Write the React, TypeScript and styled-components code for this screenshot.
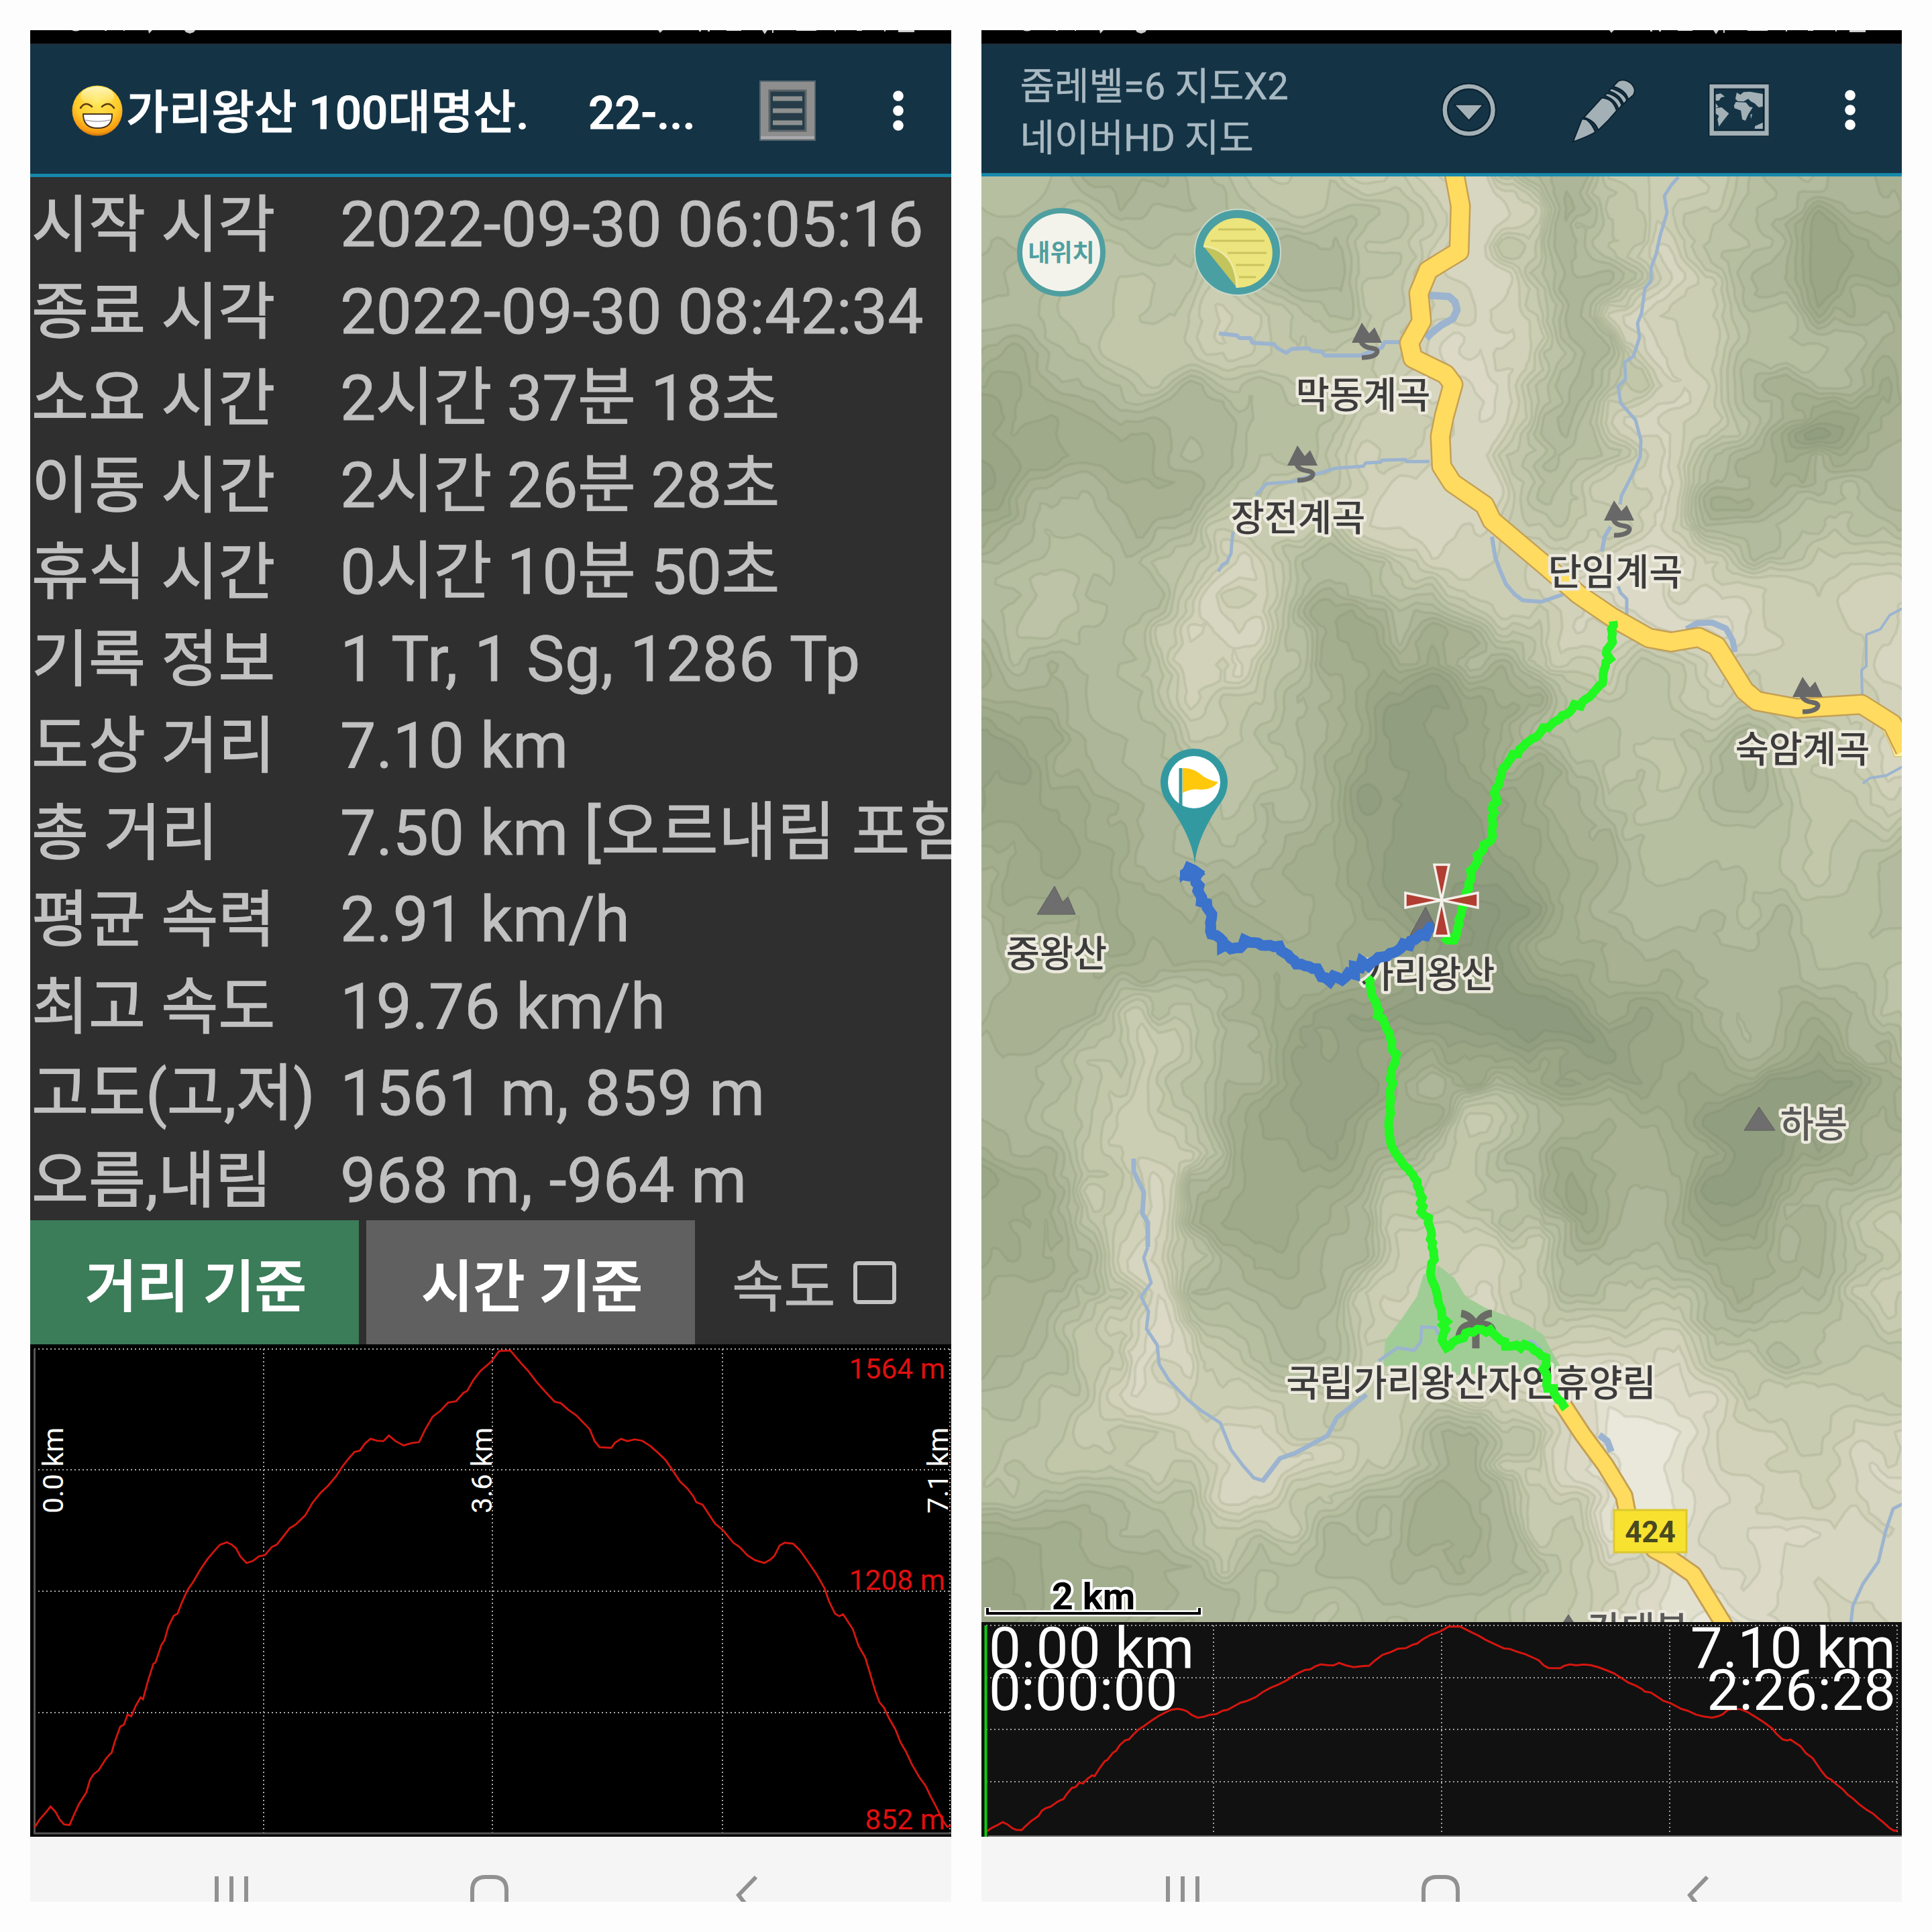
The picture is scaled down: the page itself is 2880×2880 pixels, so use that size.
// src/pages/TrackReport.tsx
import React from "react";
import styled, { createGlobalStyle } from "styled-components";

const GlobalStyle = createGlobalStyle`
  * { box-sizing: border-box; }
  body {
    margin: 0;
    background: #fdfdfd;
    font-family: Roboto, "Noto Sans CJK KR", sans-serif;
  }
`;

/* ---------- data ---------- */

const infoRows = [
  { label: "시작 시각", value: "2022-09-30 06:05:16" },
  { label: "종료 시각", value: "2022-09-30 08:42:34" },
  { label: "소요 시간", value: "2시간 37분 18초", track: -0.8 },
  { label: "이동 시간", value: "2시간 26분 28초", track: -0.8 },
  { label: "휴식 시간", value: "0시간 10분 50초", track: -0.8 },
  { label: "기록 정보", value: "1 Tr, 1 Sg, 1286 Tp", track: 0.5 },
  { label: "도상 거리", value: "7.10 km" },
  { label: "총 거리", value: "7.50 km [오르내림 포함]" },
  { label: "평균 속력", value: "2.91 km/h" },
  { label: "최고 속도", value: "19.76 km/h" },
  { label: "고도(고,저)", value: "1561 m, 859 m", track: 0.3 },
  { label: "오름,내림", value: "968 m, -964 m", track: 0.3 },
];

// elevation samples, x 0..1487, y 0..1030 (top = highest)
const elevation =
  "0,1018 8,1001 18,986 26,973 34,984 41,1001 48,1011 57,1012 62,996 72,968 84,943 90,916 96,904 104,896 116,871 122,862 125,859 130,836 139,803 145,799 151,777 157,781 164,759 172,741 176,745 184,706 193,669 196,667 206,629 211,619 217,591 226,567 232,563 239,539 248,513 257,496 269,469 281,446 294,426 301,416 312,411 320,416 327,424 334,441 344,455 354,451 364,441 374,438 385,421 393,416 404,398 414,381 424,373 439,354 451,327 464,306 476,291 489,271 500,249 509,234 519,219 528,216 536,201 545,191 556,195 566,196 575,184 586,196 599,205 612,200 624,198 634,171 646,144 659,131 671,114 684,111 696,93 702,89 712,66 724,46 741,27 754,4 772,3 779,14 792,34 802,48 814,69 829,91 844,112 854,115 866,129 879,141 894,161 901,171 909,196 917,209 936,210 942,199 952,191 962,196 974,192 986,195 999,206 1012,221 1024,236 1036,259 1047,281 1059,296 1069,313 1074,326 1084,331 1094,351 1104,371 1117,385 1134,412 1144,421 1157,439 1169,449 1184,455 1194,448 1201,439 1209,418 1217,412 1231,414 1242,428 1256,454 1269,479 1282,509 1289,536 1299,563 1306,568 1312,564 1318,576 1328,596 1337,631 1348,656 1356,691 1364,726 1371,751 1378,762 1387,786 1397,809 1405,836 1414,856 1424,884 1436,911 1446,929 1454,951 1464,976 1474,1003 1481,1016 1487,1013"
    .split(" ")
    .map((p) => p.split(",").map(Number));

const elevationPath = (x: number, y: number, w: number, h: number) =>
  elevation.map(([px, py]) => `${(x + (px / 1487) * w).toFixed(1)},${(y + (py / 1030) * h).toFixed(1)}`).join(" ");

/* ---------- terrain ---------- */

// coarse height grid, one row per ~127px of map, 0 = valley floor
const heights = [
  [4, 5, 6, 4, 2, 2, 1, 5, 2, 3, 5, 5],
  [5, 4, 4, 3, 5, 3, 1, 5, 1, 4, 7, 6],
  [5, 4, 3, 2, 3, 2, 1, 5, 1, 3, 4, 6],
  [8, 6, 6, 4, 4, 2, 1, 5, 1, 4, 8, 5],
  [6, 5, 5, 3, 2, 1, 1, 3, 1, 6, 4, 5],
  [4, 3, 4, 1, 6, 4, 3, 1, 1, 1, 2, 1],
  [6, 5, 4, 2, 5, 8, 7, 3, 3, 2, 2, 1],
  [8, 6, 5, 3, 5, 8, 7, 5, 3, 5, 3, 1],
  [6, 7, 5, 4, 6, 8, 8, 6, 4, 4, 3, 4],
  [5, 6, 6, 6, 6, 7, 9, 6, 5, 5, 4, 4],
  [5, 5, 3, 5, 7, 8, 8, 9, 7, 5, 6, 3],
  [5, 4, 2, 5, 8, 6, 3, 5, 6, 8, 8, 6],
  [7, 5, 1, 6, 6, 3, 3, 7, 5, 8, 5, 3],
  [6, 5, 1, 5, 5, 2, 1, 4, 3, 6, 5, 2],
  [5, 4, 1, 3, 4, 2, 1, 1, 1, 3, 3, 3],
  [4, 3, 2, 1, 1, 3, 5, 1, 0, 1, 2, 1],
  [6, 6, 5, 3, 4, 6, 5, 2, 0, 1, 1, 1],
  [7, 6, 5, 5, 4, 4, 4, 3, 1, 0, 1, 1],
];

const clamp = (v: number, a: number, b: number) => Math.max(a, Math.min(b, v));

const cubic = (p: number[], t: number) =>
  p[1] + 0.5 * t * (p[2] - p[0] + t * (2 * p[0] - 5 * p[1] + 4 * p[2] - p[3] + t * (3 * (p[1] - p[2]) + p[3] - p[0])));

const baseHeight = (x: number, y: number) => {
  const gx = clamp(x / 124.8, 0, 10.999);
  const gy = clamp(y / 126.8, 0, 16.999);
  const ix = Math.floor(gx);
  const iy = Math.floor(gy);
  const rows = [-1, 0, 1, 2].map((dy) => {
    const row = heights[clamp(iy + dy, 0, 17)];
    return cubic([-1, 0, 1, 2].map((dx) => row[clamp(ix + dx, 0, 11)]), gx - ix);
  });
  return 9 * Math.pow(Math.max(0, cubic(rows, gy - iy)) / 9, 0.88);
};

const hash = (x: number, y: number, s: number) => {
  const n = Math.sin(x * 127.1 + y * 311.7 + s * 74.7) * 43758.5453;
  return n - Math.floor(n);
};

// linear interpolation keeps the gullies angular
const noise = (x: number, y: number, s: number) => {
  const ix = Math.floor(x);
  const iy = Math.floor(y);
  const u = x - ix;
  const v = y - iy;
  const a = hash(ix, iy, s) * (1 - u) + hash(ix + 1, iy, s) * u;
  const b = hash(ix, iy + 1, s) * (1 - u) + hash(ix + 1, iy + 1, s) * u;
  return (a * (1 - v) + b * v) * 2 - 1;
};

const terrainHeight = (x: number, y: number) => {
  const wx = noise(x / 52, y / 52, 1) * 46 + noise(x / 24, y / 24, 2) * 15;
  const wy = noise(x / 52, y / 52, 3) * 46 + noise(x / 24, y / 24, 4) * 15;
  const ridge = 0.5 - Math.abs(noise((x + wx) / 120, (y + wy) / 120, 5));
  return baseHeight(x + wx, y + wy) + ridge * 0.9;
};

const STEP = 8;
const GW = 179;
const GH = 277;

const field: number[] = [];
for (let j = 0; j < GH; j++) {
  for (let i = 0; i < GW; i++) {
    const edge = i === 0 || j === 0 || i === GW - 1 || j === GH - 1;
    field.push(edge ? -20 : terrainHeight((i - 3) * STEP, (j - 3) * STEP));
  }
}

// marching squares: from-edge / to-edge for every corner case
const cases: Record<number, string[]> = {
  1: ["LT"], 2: ["TR"], 3: ["LR"], 4: ["RB"], 5: ["LT", "RB"], 6: ["TB"], 7: ["LB"],
  8: ["BL"], 9: ["BT"], 10: ["TR", "BL"], 11: ["BR"], 12: ["RL"], 13: ["RT"], 14: ["TL"],
};

const contour = (level: number) => {
  const next = new Map<number, number>();
  const pts = new Map<number, string>();
  const at = (i: number, j: number) => field[j * GW + i];
  const edgeKey = (i: number, j: number, e: string) => {
    if (e === "B") j += 1;
    if (e === "R") i += 1;
    const vertical = e === "L" || e === "R";
    const key = (j * GW + i) * 2 + (vertical ? 1 : 0);
    if (!pts.has(key)) {
      const a = at(i, j);
      const b = vertical ? at(i, j + 1) : at(i + 1, j);
      const t = (level - a) / (b - a);
      const x = (i - 3 + (vertical ? 0 : t)) * STEP;
      const y = (j - 3 + (vertical ? t : 0)) * STEP;
      pts.set(key, `${x.toFixed(1)} ${y.toFixed(1)}`);
    }
    return key;
  };
  for (let j = 0; j < GH - 1; j++) {
    for (let i = 0; i < GW - 1; i++) {
      const idx =
        (at(i, j) > level ? 1 : 0) | (at(i + 1, j) > level ? 2 : 0) |
        (at(i + 1, j + 1) > level ? 4 : 0) | (at(i, j + 1) > level ? 8 : 0);
      (cases[idx] || []).forEach((c) => next.set(edgeKey(i, j, c[0]), edgeKey(i, j, c[1])));
    }
  }
  let d = "";
  while (next.size) {
    const start = next.keys().next().value as number;
    let key: number | undefined = start;
    const loop: string[] = [];
    while (key !== undefined && next.has(key)) {
      loop.push(pts.get(key) as string);
      const to: number | undefined = next.get(key);
      next.delete(key);
      key = to;
    }
    // specks of a few cells are dropped
    if (loop.length > 14) d += `M${loop.join("L")}Z`;
  }
  return d;
};

const palette = [
  [230, 228, 213], [219, 217, 197], [208, 209, 184], [198, 202, 174], [187, 194, 165],
  [177, 186, 156], [167, 177, 146], [158, 169, 138], [150, 161, 131], [141, 153, 124],
];

const shade = (h: number) => {
  const v = clamp(h, 0, 8.999);
  const i = Math.floor(v);
  return `rgb(${palette[i].map((c, k) => Math.round(c + (palette[i + 1][k] - c) * (v - i))).join(",")})`;
};

const bands = Array.from({ length: 19 }, (_, i) => 0.2 + i * 0.5).map((level) => ({
  d: contour(level),
  fill: shade(level + 0.2),
}));

/* ---------- map lines ---------- */

const road1 =
  "2167,255 2169,264 2177,307 2175,375 2155,387 2129,403 2115,437 2119,479 2101,511 2106,534 2155,558 2166,573 2153,620 2147,650 2149,695 2165,720 2213,753 2224,776 2307,846 2353,886 2403,920 2458,951 2491,957 2532,950 2559,963 2601,1030 2619,1045 2679,1056 2775,1050 2821,1079 2840,1118";
const road2 = "2326,2088 2359,2138 2393,2184 2421,2230 2427,2262 2466,2310 2488,2322 2524,2347 2575,2430";

const rivers = [
  { w: 6, p: "1817,497 1844,500 1848,504 1864,504 1867,511 1899,513 1903,518 1917,526 1926,520 1950,519 1956,523 1970,524 1975,530 2028,530 2050,522 2060,518 2064,510 2087,510" },
  { w: 11, p: "2128,440 2160,442 2169,450 2172,462 2166,475 2148,485 2133,497 2126,504" },
  { w: 5, p: "2131,688 2097,688 2095,685 2060,686 2058,689 2036,690 2032,695 1991,698 1968,705 1927,718 1888,721 1872,738" },
  { w: 5, p: "1838,793 1836,812 1835,825 1829,838 1822,842 1816,852" },
  { w: 5, p: "2502,264 2492,275 2481,292 2485,317 2475,350 2469,378 2461,400 2461,418 2452,430 2447,467 2441,482 2444,503 2435,531 2422,540 2423,565 2412,576 2416,601 2438,626 2446,656 2445,681 2433,708 2417,739 2415,752" },
  { w: 6, p: "2401,785 2392,800 2388,822" },
  { w: 5, p: "2412,874 2416,884 2425,893 2425,920" },
  { w: 6, p: "2224,800 2229,831 2236,850 2245,871 2258,886 2270,895 2298,897 2330,886" },
  { w: 9, p: "2514,938 2530,929 2552,928 2573,937 2583,955 2586,972" },
  { w: 4, p: "2840,905 2817,917 2803,938 2782,946 2782,993 2775,999 2776,1036" },
  { w: 4, p: "2777,1168 2787,1160 2812,1156 2836,1143" },
  { w: 7, p: "1690,1727 1690,1746 1697,1761 1705,1777 1703,1809 1711,1822 1711,1859" },
  { w: 5, p: "1711,1859 1705,1875 1711,1896 1716,1912 1701,1933 1712,1955 1709,1981 1725,2005 1728,2034 1743,2058 1771,2087 1791,2103 1819,2121 1835,2161 1853,2185 1869,2203 1885,2208" },
  { w: 7, p: "1882,2208 1908,2174 1931,2166 1979,2140 1993,2113 2037,2079" },
  { w: 5, p: "2055,2029 2083,2009 2108,2013 2118,2000 2119,1978 2140,1979 2144,1990" },
  { w: 6, p: "2241,1995 2250,2003 2270,2003 2284,2000 2298,2014" },
  { w: 5, p: "2840,2240 2822,2249 2811,2282 2800,2328 2777,2361 2762,2394 2759,2420" },
  { w: 10, p: "2384,2139 2396,2148 2402,2164" },
];

const tracks = {
  north:
    "2405,926 2398,975 2388,1018 2369,1039 2334,1064 2298,1091 2256,1125 2240,1152 2231,1183 2224,1212 2226,1248 2207,1271 2195,1299 2187,1330 2177,1365 2170,1396 2155,1404",
  south:
    "2037,1458 2052,1501 2073,1547 2083,1572 2073,1603 2073,1654 2070,1690 2078,1715 2112,1761 2118,1793 2132,1835 2137,1877 2132,1896 2143,1933 2152,1970 2150,1998 2157,2010 2180,1991 2196,1982 2222,1982 2244,2007 2278,2005 2303,2024 2306,2063 2334,2100",
  recorded:
    "1764,1312 1769,1300 1779,1297 1787,1327 1805,1363 1805,1394 1828,1414 1848,1412 1863,1403 1899,1412 1930,1430 1976,1458 2006,1455 2032,1438 2073,1422 2103,1402 2137,1381",
};

// gps jitter along a track
const roughen = (line: string, amp: number, seed: number) => {
  const pts = line.split(" ").map((p) => p.split(",").map(Number));
  const out: string[] = [];
  pts.slice(1).forEach(([x2, y2], k) => {
    const [x1, y1] = pts[k];
    const len = Math.hypot(x2 - x1, y2 - y1);
    const n = Math.max(1, Math.round(len / 6));
    for (let i = 0; i < n; i++) {
      const r = hash(k, i, seed);
      const o = (r - 0.5) * amp * (r > 0.9 || r < 0.08 ? 2.2 : 1);
      const t = i / n;
      out.push(`${(x1 + (x2 - x1) * t - ((y2 - y1) / len) * o).toFixed(1)},${(y1 + (y2 - y1) * t + ((x2 - x1) / len) * o).toFixed(1)}`);
    }
  });
  out.push(line.split(" ").pop() as string);
  return out.join(" ");
};

const labels = [
  { text: "막동계곡", x: 2032, y: 608 },
  { text: "장전계곡", x: 1935, y: 791 },
  { text: "단임계곡", x: 2408, y: 872 },
  { text: "숙암계곡", x: 2687, y: 1136 },
  { text: "중왕산", x: 1575, y: 1441 },
  { text: "가리왕산", x: 2128, y: 1472 },
  { text: "하봉", x: 2704, y: 1695, soft: true },
  { text: "국립가리왕산자연휴양림", x: 2193, y: 2081 },
  { text: "간대봉", x: 2442, y: 2449, soft: true },
];

const valleys = [[2015, 511], [1919, 694], [2391, 776], [2672, 1039]];

/* ---------- icons ---------- */

const GrinIcon = () => (
  <svg width="76" height="78" viewBox="0 0 76 78">
    <defs>
      <radialGradient id="face" cx="0.5" cy="0.3" r="0.72">
        <stop offset="0" stopColor="#ffe95e" />
        <stop offset="0.6" stopColor="#fecb2a" />
        <stop offset="0.88" stopColor="#f79a12" />
        <stop offset="1" stopColor="#b9640b" />
      </radialGradient>
      <linearGradient id="shine" x1="0" y1="0" x2="0" y2="1">
        <stop offset="0" stopColor="#fff6b8" />
        <stop offset="1" stopColor="#fff6b8" stopOpacity="0" />
      </linearGradient>
    </defs>
    <circle cx="38" cy="39" r="37.5" fill="url(#face)" />
    <ellipse cx="38" cy="17" rx="25" ry="14" fill="url(#shine)" />
    <path d="M13 35Q20 24 30 33M45 33Q55 24 63 35" fill="none" stroke="#5b3a12" strokeWidth="2.6" strokeLinecap="round" />
    <path d="M17 44H60Q61 65 38.500 65Q17 65 17 44Z" fill="#fff" stroke="#4c3420" strokeWidth="2" />
    <path d="M20 53Q38 57 57 53" fill="none" stroke="#a8a8b2" strokeWidth="1.6" />
  </svg>
);

const NoteIcon = () => (
  <svg width="84" height="92" viewBox="0 0 84 92">
    <rect x="0" y="1" width="84" height="90" fill="#55656e" />
    <rect x="2" y="3" width="80" height="86" fill="#8e8e8e" />
    <rect x="2" y="84" width="80" height="4" fill="#a9a9ad" />
    <rect x="15" y="16" width="54" height="60" fill="#263d49" stroke="#5c6468" strokeWidth="3" />
    <path d="M20 28H64M20 46H64M20 64H64" stroke="#8e9090" strokeWidth="7" />
  </svg>
);

const MoreIcon = () => (
  <svg width="16" height="60" viewBox="0 0 16 60">
    <circle cx="8" cy="8" r="7.800" fill="#fff" />
    <circle cx="8" cy="30" r="7.800" fill="#fff" />
    <circle cx="8" cy="52" r="7.800" fill="#fff" />
  </svg>
);

const DropIcon = () => (
  <svg width="82" height="82" viewBox="84 97 242 246" preserveAspectRatio="none">
    <circle cx="204" cy="220" r="106" fill="none" stroke="#0c2230" strokeWidth="32" />
    <circle cx="204" cy="220" r="106" fill="none" stroke="#a3b0b6" strokeWidth="19" />
    <path d="M140 196H267L204 267Z" fill="#a3b0b6" stroke="#0c2230" strokeWidth="5" />
  </svg>
);

const PencilIcon = () => (
  <svg width="98" height="98" viewBox="645 66 284 294" preserveAspectRatio="none">
    <g fill="#a3b0b6" stroke="#0c2230" strokeWidth="6">
      <path d="M653 355L692 252L712 256Q738 278 750 312Q700 340 653 355Z" />
      <path d="M700 246L778 158Q826 160 842 216Q806 262 762 304Q750 262 700 246Z" />
      <path d="M790 148L800 138Q852 150 864 192L850 210Q838 166 790 148Z" />
      <path d="M808 128L818 116Q876 136 886 170L872 188Q858 144 808 128Z" />
      <path d="M826 108L848 84Q872 70 902 92Q930 120 914 146L892 166Q880 122 826 108Z" />
    </g>
  </svg>
);

const WorldIcon = () => (
  <svg width="92" height="82" viewBox="1236 97 270 246" preserveAspectRatio="none">
    <rect x="1238" y="99" width="266" height="240" fill="#0c2230" />
    <path d="M1243 105H1502V335H1243ZM1262 123V314H1484V123Z" fill="#a3b0b6" fillRule="evenodd" />
    <rect x="1267" y="128" width="210" height="181" fill="#143446" />
    <g fill="#a3b0b6">
      <path d="M1270 150L1292 146L1310 160L1294 164L1284 178H1270Z" />
      <path d="M1270 190L1282 206L1270 210ZM1270 212L1296 208L1328 236L1300 272L1284 294L1278 262L1284 246L1270 236Z" />
      <path d="M1356 170L1362 142L1378 152L1392 140L1420 138L1476 148V204L1458 208L1440 190L1424 182L1412 170L1392 182L1366 180Z" />
      <path d="M1350 200L1358 184L1402 186L1418 206L1432 208L1412 240L1400 268L1386 262L1380 222L1352 212Z" />
      <path d="M1422 240L1430 238L1424 260ZM1440 304L1442 292L1476 276V304Z" />
    </g>
  </svg>
);

const NavIcons = () => (
  <svg width="1373" height="97" viewBox="0 0 1373 97" fill="none" stroke="#919191" strokeWidth="6">
    <path d="M278 59V97M300 59V97M322 59V97" />
    <path d="M659 100V80Q659 60 679 60H690Q710 60 710 80V100" />
    <path d="M1082 60L1056 87L1066 100" />
  </svg>
);

const StatusMarks = () => (
  <svg width="1373" height="19" viewBox="0 0 1373 19" fill="#cfcfcf">
    <path d="M62 0H74Q68 3 62 0ZM111 0H114V1H111ZM139 0H141V1H139ZM176 0H182L177 5ZM230 0H246L244 3L238 5L232 3Z" />
    <path d="M936 0H943L939 4ZM997 0H1000V2H997ZM1010 0H1013V2H1010ZM1038 0H1060V1H1038ZM1091 0H1099L1095 6ZM1106 0H1108V4H1106ZM1142 0H1172V1H1142ZM1199 0H1201V2H1199ZM1232 0H1240V1H1232ZM1273 0H1275V2H1273ZM1294 0H1318V3H1294Z" />
  </svg>
);

/* ---------- map ---------- */

const TerrainMap = () => (
  <svg width="1373" height="2155" viewBox="1463 263 1373 2155">
    <rect x="1463" y="263" width="1373" height="2157" fill="#e9e8da" />
    <g transform="translate(1463 263)">
      {bands.map((b) => (
        <path key={b.fill} d={b.d} fill={b.fill} stroke="rgba(104,120,88,0.14)" strokeWidth="4" strokeLinejoin="round" />
      ))}
    </g>
    <path d="M2146 1888L2168 1905L2185 1933L2213 1949L2269 1970L2300 1989L2317 2021L2328 2040L2168 2050L2062 2036L2065 1998L2090 1965L2112 1933L2122 1900Z" fill="#a0cd95" />
    <g fill="none" stroke="#9cb4cf" strokeLinejoin="round">
      {rivers.map((r) => (
        <polyline key={r.p} points={r.p} strokeWidth={r.w} />
      ))}
    </g>
    <path d="M2784 1060L2812 1064L2836 1100V1128H2824Q2812 1090 2784 1060Z" fill="#fff29a" stroke="#d8c88a" strokeWidth="2" />
    <g fill="none" strokeLinejoin="round">
      <polyline points={road1} stroke="#c5a055" strokeWidth="31" />
      <polyline points={road1} stroke="#ffdc60" strokeWidth="26" />
      <polyline points={road2} stroke="#c5a055" strokeWidth="28" />
      <polyline points={road2} stroke="#ffdc60" strokeWidth="22" />
    </g>

    <rect x="2406" y="2251" width="108" height="63" fill="#f8e230" stroke="#dcc82e" strokeWidth="3" />
    <RoadNumber x="2460" y="2299">424</RoadNumber>

    {valleys.map(([x, y]) => (
      <g key={x} transform={`translate(${x} ${y})`}>
        <path d="M0 0L15 -30L26 -14L34 -23L45 0Z" fill="#686868" />
        <path d="M14 -1Q18 7 30 8Q42 10 36 17Q30 22 15 22" fill="none" stroke="#686868" strokeWidth="7" />
      </g>
    ))}
    <g fill="#6e6e6e" stroke="#5d5d5d" strokeWidth="1">
      <path d="M1546 1363L1572 1321L1584 1345L1592 1337L1603 1363Z" />
      <path d="M2102 1394L2125 1352L2143 1388Z" />
      <path d="M2600 1685L2622 1650L2646 1685Z" />
      <path d="M2326 2425L2338 2407L2350 2425Z" />
    </g>
    <path d="M2200 1984V2010M2200 1976Q2192 1960 2178 1958M2200 1976Q2210 1958 2224 1958M2198 1974Q2178 1974 2175 1992M2202 1974Q2222 1972 2225 1984" fill="none" stroke="#6b6b66" strokeWidth="11" />

    {labels.map((l) => (
      <MapLabel key={l.text} x={l.x} y={l.y} $soft={l.soft}>
        {l.text}
      </MapLabel>
    ))}

    <g fill="none" strokeMiterlimit="8">
      <polyline points={roughen(tracks.north, 3.5, 11)} stroke="#22f822" strokeWidth="13" />
      <polyline points={roughen(tracks.south, 4, 12)} stroke="#22f822" strokeWidth="13" />
      <polyline points={roughen(tracks.recorded, 5, 13)} stroke="#3a72cc" strokeWidth="16" />
    </g>
    <path d="M2146 1400L2176 1398L2172 1408H2155Z" fill="#22f822" />
    <path d="M1759 1316V1298L1775 1286L1797 1303L1785 1312L1770 1306Z" fill="#3a72cc" />

    <g transform="translate(2149 1342)" fill="#b5352b" fillOpacity="0.92" stroke="#f4f0ea" strokeWidth="3.500">
      <path d="M0 0L-11 -53H11Z" />
      <path d="M0 0L-11 53H11Z" />
      <path d="M0 0L-54 -11V11Z" />
      <path d="M0 0L54 -11V11Z" />
    </g>

    <path d="M1781 1288Q1778 1248 1740 1196A50 50 0 1 1 1820 1196Q1784 1248 1781 1288Z" fill="#3399a1" />
    <circle cx="1780" cy="1166" r="39" fill="#fff" />
    <path d="M1760 1145V1201" stroke="#3399a1" strokeWidth="5" />
    <path d="M1763 1145Q1776 1144 1788 1153Q1800 1163 1816 1166Q1806 1178 1790 1177Q1774 1175 1763 1182Z" fill="#ffc80a" />

    <circle cx="1582" cy="376" r="62" fill="#f3f3ec" stroke="#4f9fa0" strokeWidth="8" />
    <LocateText x="1582" y="390">내위치</LocateText>

    <circle cx="1845" cy="376" r="64" fill="#4a9fa3" stroke="#c9d8c8" strokeWidth="2" />
    <path d="M1794 366A52 52 0 1 1 1844 429Q1838 374 1794 366Z" fill="#ece47c" />
    <path d="M1794 367Q1842 372 1844 429Z" fill="#c4c45c" />
    <path d="M1794 367Q1842 372 1844 429" fill="none" stroke="#eeeaa0" strokeWidth="3" />
    <path d="M1816 342H1872M1805 359H1885M1830 377H1888M1842 395H1885M1847 413H1872" stroke="#cbc35e" strokeWidth="3" />

    <path d="M1472 2396V2405H1788V2396" fill="none" stroke="#fff" strokeWidth="9" />
    <path d="M1472 2397V2405H1788V2397" fill="none" stroke="#000" strokeWidth="4" />
    <ScaleText x="1630" y="2399">2 km</ScaleText>
  </svg>
);

/* ---------- charts ---------- */

const ProfileChart = () => (
  <svg width="1373" height="734" viewBox="45 2004 1373 734">
    <g stroke="#a8a8a8" strokeWidth="2" strokeDasharray="2 4">
      <path d="M51 2011H1418M51 2191H1418M51 2372H1418M51 2553H1418" />
      <path d="M393 2011V2733M734 2011V2733M1077 2011V2733M1416 2011V2733" />
    </g>
    <path d="M51.500 2011V2733H1418" fill="none" stroke="#555" strokeWidth="3" />
    <polyline points={elevationPath(51.5, 2011, 1366, 722)} fill="none" stroke="#d4160f" strokeWidth="2.800" />
    <AltText x="1409" y="2055">1564 m</AltText>
    <AltText x="1409" y="2370">1208 m</AltText>
    <AltText x="1409" y="2727">852 m</AltText>
    <DistText transform="translate(94 2256) rotate(-90)">0.0 km</DistText>
    <DistText transform="translate(733 2256) rotate(-90)">3.6 km</DistText>
    <DistText transform="translate(1413 2256) rotate(-90)">7.1 km</DistText>
  </svg>
);

const MiniChart = () => (
  <svg width="1373" height="320" viewBox="1463 2419 1373 320">
    <g stroke="#a0a0a0" strokeWidth="2" strokeDasharray="2 4">
      <path d="M1470 2424H2829M1470 2502H2829M1470 2579H2829M1470 2657H2829" />
      <path d="M1809 2424V2733M2149 2424V2733M2489 2424V2733M2828 2424V2733" />
    </g>
    <polyline points={elevationPath(1471, 2424.5, 1358, 310)} fill="none" stroke="#d4160f" strokeWidth="3" />
    <path d="M1469.500 2424V2739" stroke="#10c810" strokeWidth="4" />
    <path d="M1473 2738H2836" stroke="#8a8a8a" strokeWidth="1.500" />
    <StatText x="1474" y="2487">0.00 km</StatText>
    <StatText x="1474" y="2550">0:00:00</StatText>
    <StatText x="2826" y="2487" textAnchor="end">7.10 km</StatText>
    <StatText x="2826" y="2550" textAnchor="end">2:26:28</StatText>
  </svg>
);

/* ---------- page ---------- */

const App = () => {
  return (
    <Page>
      <GlobalStyle />
      <Phone>
        <StatusBar><StatusMarks /></StatusBar>
        <Header>
          <GrinIcon />
          <Title>{"가리왕산 100대명산.     22-..."}</Title>
          <HeaderIcon $gap={98}><NoteIcon /></HeaderIcon>
          <HeaderIcon $gap={115}><MoreIcon /></HeaderIcon>
        </Header>
        <InfoTable>
          {infoRows.map((row) => (
            <InfoRow key={row.label}>
              <RowLabel>{row.label}</RowLabel>
              <RowValue $track={row.track || 0}>{row.value}</RowValue>
            </InfoRow>
          ))}
        </InfoTable>
        <ModeBar>
          <ModeButton $active>거리 기준</ModeButton>
          <ModeButton>시간 기준</ModeButton>
          <SpeedToggle>
            속도
            <CheckBox />
          </SpeedToggle>
        </ModeBar>
        <ChartBox $color="#000"><ProfileChart /></ChartBox>
        <NavBar><NavIcons /></NavBar>
      </Phone>

      <Phone>
        <StatusBar><StatusMarks /></StatusBar>
        <Header>
          <MapTitle>
            <div>줌레벨=6 지도X2</div>
            <div>네이버HD 지도</div>
          </MapTitle>
          <HeaderIcon $gap={2}><DropIcon /></HeaderIcon>
          <HeaderIcon $gap={111}><PencilIcon /></HeaderIcon>
          <HeaderIcon $gap={106}><WorldIcon /></HeaderIcon>
          <HeaderIcon $gap={112}><MoreIcon /></HeaderIcon>
        </Header>
        <MapBox><TerrainMap /></MapBox>
        <ChartBox $color="#111"><MiniChart /></ChartBox>
        <NavBar><NavIcons /></NavBar>
      </Phone>
    </Page>
  );
};

const Page = styled.div`
  display: flex;
  gap: 45px;
  width: 2880px;
  height: 2880px;
  padding: 45px;
  background: #fdfdfd;
`;

const Phone = styled.section`
  display: flex;
  flex-direction: column;
  width: 1373px;
  height: 2790px;
  overflow: hidden;
  background: #2f2f2f;

  svg {
    display: block;
    flex-shrink: 0;
  }
`;

const StatusBar = styled.div`
  height: 20px;
  background: #000;
`;

const Header = styled.header`
  display: flex;
  align-items: center;
  height: 199px;
  padding-left: 62px;
  padding-top: 4px;
  background: #143446;
  border-top: 2px solid #20303a;
  border-bottom: 5px solid #1788ab;
`;

const Title = styled.h1`
  margin: 0 0 0 5px;
  padding-top: 8px;
  width: 846px;
  font-size: 69.200px;
  font-weight: 500;
  line-height: 100px;
  word-spacing: 0.500px;
  color: #fff;
  white-space: pre;
  -webkit-text-stroke: 1px #fff;
`;

const MapTitle = styled.div`
  width: 626px;
  margin-left: -4px;
  padding-top: 8px;
  font-size: 56px;
  line-height: 77px;
  color: #a9b9c2;
  white-space: nowrap;
  -webkit-text-stroke: 0.500px #a9b9c2;
`;

const HeaderIcon = styled.div<{ $gap: number }>`
  margin-left: ${(p) => p.$gap}px;
`;

const InfoTable = styled.div`
  height: 1555px;
`;

const InfoRow = styled.div`
  display: grid;
  grid-template-columns: 462px 1fr;
  align-items: center;
  height: 129.500px;
  font-size: 95px;
  line-height: 129px;
  color: #c1c1c1;
  white-space: nowrap;
`;

const RowLabel = styled.span`
  font-size: 92.500px;
  padding-left: 2px;
  padding-top: 7px;
  -webkit-text-stroke: 1.300px #c1c1c1;
`;

const RowValue = styled.span<{ $track: number }>`
  overflow: hidden;
  padding-top: 5px;
  letter-spacing: ${(p) => p.$track}px;
  -webkit-text-stroke: 0.800px #c1c1c1;
`;

const ModeBar = styled.div`
  display: grid;
  grid-template-columns: 490px 490px 1fr;
  column-gap: 11px;
  height: 185px;
`;

const ModeButton = styled.button<{ $active?: boolean }>`
  padding: 0 0 0 4px;
  border: 0;
  background: ${(p) => (p.$active ? "#3b7c59" : "#606060")};
  color: #fff;
  font-family: inherit;
  font-size: 84px;
  font-weight: 500;
  -webkit-text-stroke: 1.500px #fff;
`;

const SpeedToggle = styled.label`
  display: flex;
  align-items: center;
  padding-left: 44px;
  gap: 26px;
  font-size: 84px;
  color: #bdbdbd;
  -webkit-text-stroke: 0.800px #bdbdbd;
`;

const CheckBox = styled.span`
  width: 64px;
  height: 64px;
  border: 6px solid #c3c3c3;
  border-radius: 7px;
`;

const ChartBox = styled.div<{ $color: string }>`
  flex-shrink: 0;
  background: ${(p) => p.$color};
`;

const MapBox = styled.div`
  height: 2155px;
  flex-shrink: 0;
`;

const NavBar = styled.div`
  flex: 1;
  background: #f5f5f5;
`;

const MapLabel = styled.text<{ $soft?: boolean }>`
  font-size: 54.500px;
  font-weight: 500;
  fill: ${(p) => (p.$soft ? "#5a5a58" : "#3c3c3c")};
  stroke: #ece9dd;
  stroke-width: 9px;
  stroke-linejoin: round;
  paint-order: stroke;
  text-anchor: middle;
`;

const RoadNumber = styled.text`
  font-size: 44px;
  font-weight: 700;
  fill: #4a4a20;
  text-anchor: middle;
`;

const LocateText = styled.text`
  font-size: 36px;
  font-weight: 700;
  fill: #4f9fa0;
  text-anchor: middle;
`;

const ScaleText = styled.text`
  font-size: 56px;
  font-weight: 700;
  fill: #000;
  stroke: #fff;
  stroke-width: 8px;
  paint-order: stroke;
  text-anchor: middle;
`;

const AltText = styled.text`
  font-size: 42.500px;
  fill: #e00f0f;
  text-anchor: end;
`;

const DistText = styled.text`
  font-size: 42.500px;
  fill: #fff;
`;

const StatText = styled.text`
  font-size: 85.500px;
  fill: #fff;
`;

export default App;
